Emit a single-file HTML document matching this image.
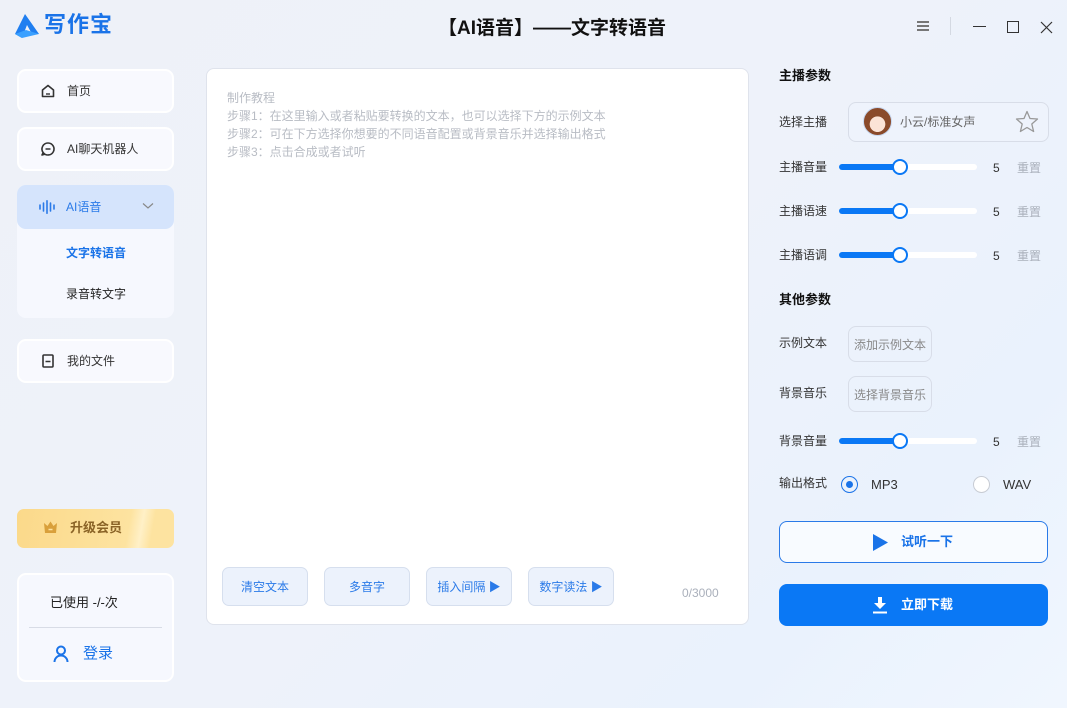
<!DOCTYPE html>
<html><head><meta charset="utf-8"><style>
*{margin:0;padding:0;box-sizing:border-box}
body{width:1067px;height:708px;overflow:hidden;position:relative;font-family:"Liberation Sans","Noto Sans CJK SC",sans-serif;line-height:1.2;background:linear-gradient(135deg,#eef1f8 0%,#eef2fa 50%,#eaf2fd 80%,#f0f6fe 100%);color:#222}
.a{position:absolute}
.nav{position:absolute;left:17px;width:157px;height:44px;background:#f8f9fe;border:2px solid #fff;border-radius:9px;font-size:12px;color:#333}
.nav span{position:absolute;left:48px;top:13px}
.nav svg{position:absolute;left:21px;top:12px}
.lbl{position:absolute;left:779px;font-size:12px;color:#333}
.tr{position:absolute;left:839px;width:138px;height:6px;border-radius:3px;background:#fff}
.tr i{position:absolute;left:0;top:0;width:61px;height:6px;background:#0a78f5;border-radius:3px}
.tr b{position:absolute;left:53px;top:-5px;width:16px;height:16px;border-radius:50%;background:#fff;border:2.5px solid #0a78f5}
.v{position:absolute;left:993px;font-size:12px;color:#333}
.rs{position:absolute;left:1017px;font-size:12px;color:#aab0bb}
.btn{position:absolute;top:567px;width:86px;height:39px;background:#ecf2fc;border:1px solid #d6dfee;border-radius:7px;color:#2a7ae8;font-size:12px;text-align:center;line-height:39px}
.ob{position:absolute;left:848px;width:84px;height:36px;border:1px solid #d8dde8;border-radius:8px;font-size:12px;color:#888;text-align:center;line-height:36px}
</style></head><body>
<svg class="a" style="left:12px;top:12px" width="30" height="28" viewBox="0 0 30 28"><path d="M13 2 L3 22 L10 26 L15 13 L20 22 L27 22 Z" fill="#1f7ef0"/><path d="M3 22 L14 18 L27 22 L10 26Z" fill="#3aa0ff"/></svg>
<div class="a" style="left:44px;top:12px;font-size:22px;font-weight:bold;color:#1a73e8;letter-spacing:1px">写作宝</div>
<div class="a" style="left:438px;top:18px;font-size:19px;font-weight:bold;color:#111">【AI语音】——文字转语音</div>
<div class="a" style="left:917px;top:21px;width:12px;height:1.5px;background:#777;box-shadow:0 4px 0 #777,0 8px 0 #777"></div>
<div class="a" style="left:950px;top:17px;width:1px;height:18px;background:#d4d9e2"></div>
<div class="a" style="left:973px;top:26px;width:13px;height:1px;background:#333"></div>
<div class="a" style="left:1007px;top:21px;width:12px;height:12px;border:1.2px solid #333"></div>
<svg class="a" style="left:1040px;top:21px" width="13" height="13" viewBox="0 0 13 13"><path d="M1 1L12 12M12 1L1 12" stroke="#333" stroke-width="1.2"/></svg>

<div class="nav" style="top:69px"><svg width="16" height="16" viewBox="0 0 16 16"><path d="M2.5 7 L8 2.5 L13.5 7 V13.5 H2.5Z" fill="none" stroke="#333" stroke-width="1.6" stroke-linejoin="round"/><path d="M6 11 H10" stroke="#333" stroke-width="1.4"/></svg><span>首页</span></div>
<div class="nav" style="top:127px"><svg width="16" height="16" viewBox="0 0 16 16"><path d="M8 2 A6 6 0 1 1 3.2 11.6 L2 14 L4.6 13.2" fill="none" stroke="#333" stroke-width="1.6" stroke-linejoin="round"/><path d="M3.2 11.6 A6 6 0 0 1 8 2" fill="none" stroke="#333" stroke-width="1.6"/><path d="M5.5 8 H10.5" stroke="#333" stroke-width="1.5"/></svg><span>AI聊天机器人</span></div>
<div class="a" style="left:17px;top:185px;width:157px;height:133px;background:#f6f8fe;border-radius:9px"></div>
<div class="a" style="left:17px;top:185px;width:157px;height:44px;background:#d5e4fc;border-radius:9px"></div>
<svg class="a" style="left:39px;top:200px" width="16" height="14" viewBox="0 0 16 14"><g stroke="#2a7ae8" stroke-width="1.6" stroke-linecap="round"><path d="M1 5v4M4.5 3v8M8 0.8v12.4M11.5 3v8M15 5v4"/></g></svg>
<div class="a" style="left:66px;top:200px;font-size:12px;color:#2a7ae8">AI语音</div>
<svg class="a" style="left:142px;top:202px" width="12" height="8" viewBox="0 0 12 8"><path d="M1 1.5 L6 6 L11 1.5" fill="none" stroke="#888" stroke-width="1.2"/></svg>
<div class="a" style="left:66px;top:246px;font-size:12px;color:#1a73e8;font-weight:bold">文字转语音</div>
<div class="a" style="left:66px;top:287px;font-size:12px;color:#222">录音转文字</div>
<div class="nav" style="top:339px"><svg width="16" height="16" viewBox="0 0 16 16"><rect x="3" y="2" width="10" height="12" rx="1" fill="none" stroke="#333" stroke-width="1.6"/><path d="M5.5 8.5 H10.5" stroke="#333" stroke-width="1.5"/></svg><span>我的文件</span></div>

<div class="a" style="left:17px;top:509px;width:157px;height:39px;border-radius:7px;background:linear-gradient(100deg,#fbd98a,#fde3a0 70%,#fff0c7 78%,#fde3a0 85%)"></div>
<svg class="a" style="left:43px;top:520px" width="15" height="14" viewBox="0 0 15 14"><path d="M1 3 L4.5 6 L7.5 1.5 L10.5 6 L14 3 L13 13 H2Z" fill="#d9a03b"/><path d="M5.5 9.5H9.5" stroke="#fde3a0" stroke-width="1.5"/></svg>
<div class="a" style="left:70px;top:520px;font-size:13px;color:#8a6326;font-weight:bold">升级会员</div>
<div class="a" style="left:17px;top:573px;width:157px;height:109px;background:#f6f8fe;border:2px solid #fff;border-radius:9px"></div>
<div class="a" style="left:50px;top:595px;font-size:13px;color:#222">已使用 -/-次</div>
<div class="a" style="left:29px;top:627px;width:133px;height:1px;background:#d8dce6"></div>
<svg class="a" style="left:53px;top:645px" width="16" height="18" viewBox="0 0 16 18"><circle cx="8" cy="5.5" r="4" fill="none" stroke="#1a73e8" stroke-width="2"/><path d="M1.5 17 A6.5 6.5 0 0 1 14.5 17" fill="none" stroke="#1a73e8" stroke-width="2"/></svg>
<div class="a" style="left:83px;top:645px;font-size:15px;color:#1a73e8">登录</div>

<div class="a" style="left:206px;top:68px;width:543px;height:557px;background:#fff;border:1px solid #dfe3ec;border-radius:8px"></div>
<div class="a" style="left:227px;top:89px;font-size:12px;line-height:18px;color:#b8bcc4">制作教程<br>步骤1：在这里输入或者粘贴要转换的文本，也可以选择下方的示例文本<br>步骤2：可在下方选择你想要的不同语音配置或背景音乐并选择输出格式<br>步骤3：点击合成或者试听</div>
<div class="btn" style="left:222px">清空文本</div>
<div class="btn" style="left:324px">多音字</div>
<div class="btn" style="left:426px">插入间隔 ▶</div>
<div class="btn" style="left:528px">数字读法 ▶</div>
<div class="a" style="left:682px;top:586px;font-size:12px;color:#aab0bb">0/3000</div>

<div class="a" style="left:779px;top:68px;font-size:13px;font-weight:bold;color:#111">主播参数</div>
<div class="lbl" style="top:115px">选择主播</div>
<div class="a" style="left:848px;top:102px;width:201px;height:40px;border:1px solid #d8dde8;border-radius:8px;background:#eef3fc"></div>
<div class="a" style="left:863px;top:107px;width:29px;height:29px;border-radius:50%;background:radial-gradient(circle at 50% 60%,#fbe3d6 0 36%,#8a4a2a 38%);border:1.5px solid #c8d8f0"></div>
<div class="a" style="left:900px;top:115px;font-size:12px;color:#666">小云/标准女声</div>
<svg class="a" style="left:1015px;top:110px" width="24" height="23" viewBox="0 0 24 23"><path d="M12 1.5 L15 8.5 L22.5 9 L16.8 14 L18.6 21.5 L12 17.5 L5.4 21.5 L7.2 14 L1.5 9 L9 8.5Z" fill="none" stroke="#999" stroke-width="1.3" stroke-linejoin="round"/></svg>
<div class="lbl" style="top:160px">主播音量</div><div class="tr" style="top:164px"><i></i><b></b></div><div class="v" style="top:161px">5</div><div class="rs" style="top:161px">重置</div>
<div class="lbl" style="top:204px">主播语速</div><div class="tr" style="top:208px"><i></i><b></b></div><div class="v" style="top:205px">5</div><div class="rs" style="top:205px">重置</div>
<div class="lbl" style="top:248px">主播语调</div><div class="tr" style="top:252px"><i></i><b></b></div><div class="v" style="top:249px">5</div><div class="rs" style="top:249px">重置</div>
<div class="a" style="left:779px;top:292px;font-size:13px;font-weight:bold;color:#111">其他参数</div>
<div class="lbl" style="top:336px">示例文本</div><div class="ob" style="top:326px">添加示例文本</div>
<div class="lbl" style="top:386px">背景音乐</div><div class="ob" style="top:376px">选择背景音乐</div>
<div class="lbl" style="top:434px">背景音量</div><div class="tr" style="top:438px"><i></i><b></b></div><div class="v" style="top:435px">5</div><div class="rs" style="top:435px">重置</div>
<div class="lbl" style="top:476px">输出格式</div>
<div class="a" style="left:841px;top:476px;width:17px;height:17px;border-radius:50%;border:1.5px solid #1a73e8"></div>
<div class="a" style="left:846px;top:481px;width:7px;height:7px;border-radius:50%;background:#1a73e8"></div>
<div class="a" style="left:871px;top:477px;font-size:13px;color:#333">MP3</div>
<div class="a" style="left:973px;top:476px;width:17px;height:17px;border-radius:50%;border:1.5px solid #c8ccd4;background:#fff"></div>
<div class="a" style="left:1003px;top:477px;font-size:13px;color:#333">WAV</div>
<div class="a" style="left:779px;top:521px;width:269px;height:42px;border:1px solid #2a7ae8;border-radius:8px;background:#f8fbff"></div>
<svg class="a" style="left:872px;top:533px" width="17" height="19" viewBox="0 0 17 19"><path d="M1 1 L16 9.5 L1 18Z" fill="#1a73e8"/></svg>
<div class="a" style="left:901px;top:534px;font-size:13px;color:#1a73e8;font-weight:bold">试听一下</div>
<div class="a" style="left:779px;top:584px;width:269px;height:42px;border-radius:8px;background:#0a78f5"></div>
<svg class="a" style="left:872px;top:597px" width="16" height="17" viewBox="0 0 16 17"><path d="M6 0H10V6H14L8 12L2 6H6Z" fill="#fff"/><rect x="1" y="14.5" width="14" height="2" fill="#fff"/></svg>
<div class="a" style="left:901px;top:597px;font-size:13px;color:#fff;font-weight:bold">立即下载</div>
</body></html>
